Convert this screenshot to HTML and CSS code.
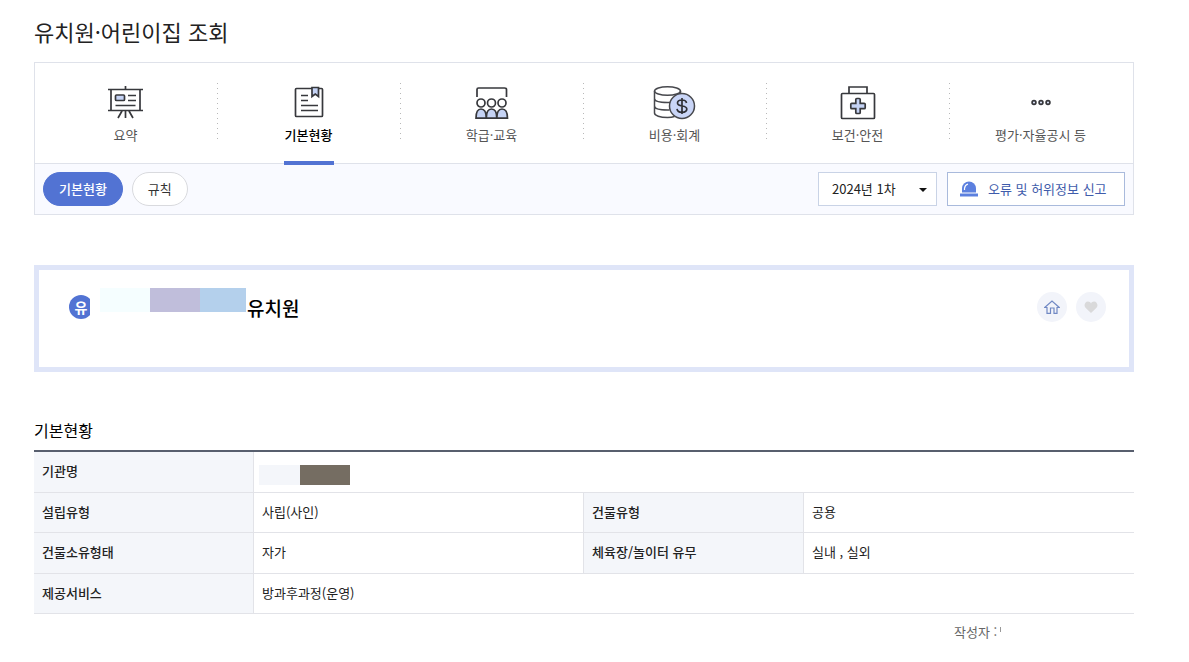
FILE: index.html
```html
<!DOCTYPE html>
<html lang="ko">
<head>
<meta charset="utf-8">
<meta name="viewport" content="width=device-width, initial-scale=1">
<title>유치원·어린이집 조회</title>
<link rel="stylesheet" href="styles.css">
</head>
<body>
<main class="page">
  <h1 class="page-title">유치원·어린이집 조회</h1>

  <div class="nav-box">
    <nav class="tabs">
      <a class="tab" href="#summary">
        <svg class="tab-icon" width="44" height="36" viewBox="0 0 44 36" fill="none" stroke="#37383c" stroke-width="1.700">
          <path d="M21.500 2v4M4 5.500h35M7 6v20M36 6v20M4 26.500h35M18 27l-4 7M21.500 27v7M25 27l4 7"/>
          <rect x="11.500" y="11" width="9" height="5.500" rx="1" fill="#c5d3f5"/>
          <path d="M24 11.500h8M24 16.500h8M11.500 21.500h20"/>
        </svg>
        <span>요약</span>
      </a>
      <a class="tab tab-active" href="#basic">
        <svg class="tab-icon" width="44" height="36" viewBox="0 0 44 36" fill="none" stroke="#37383c" stroke-width="1.700">
          <rect x="8.500" y="4.500" width="27" height="28" rx="1"/>
          <path d="M25 3.500h6.500v9l-3.200-2.500-3.300 2.500z" fill="#c5d3f5"/>
          <path d="M14 11.500h7M14 16.500h7M14 21.500h17M14 26.500h17"/>
        </svg>
        <span>기본현황</span>
      </a>
      <a class="tab" href="#class">
        <svg class="tab-icon" width="44" height="36" viewBox="0 0 44 36" fill="none" stroke="#37383c" stroke-width="1.700">
          <path d="M7 13V5.500Q7 4 8.500 4h26Q36.500 4 36.500 5.500V13"/>
          <circle cx="11" cy="19" r="4"/><circle cx="21.500" cy="19" r="4"/><circle cx="32" cy="19" r="4"/>
          <path d="M6 34.200C6 28 8 25 11 25s5.300 3 5.300 9.200zM16.300 34.200c0-6.200 2-9.200 5.200-9.200s5.300 3 5.300 9.200zM26.800 34.200c0-6.200 2-9.200 5.200-9.200s5.500 3 5.500 9.200z" fill="#c5d3f5"/>
        </svg>
        <span>학급·교육</span>
      </a>
      <a class="tab" href="#cost">
        <svg class="tab-icon" width="44" height="36" viewBox="0 0 44 36" fill="none" stroke="#47484d" stroke-width="1.500">
          <ellipse cx="14.500" cy="7" rx="13" ry="4.300"/>
          <path d="M1.500 7v22c0 2.500 5.500 4.500 13 4.500 3 0 5-.3 7-1M27.500 7v4M1.500 14.500c0 2.500 5.500 4 13 4 1.500 0 2.500-.1 4-.3M1.500 22c0 2.500 5.500 4 13 4h2"/>
          <circle cx="29" cy="22" r="12.500" fill="#c9d5f7"/>
          <path d="M29 14v16M33.500 19c-.3-2-2-3-4.500-3s-4.500 1-4.500 3c0 4.500 9.300 1.500 9.300 6 0 2-2 3.300-4.800 3.300s-4.700-1.300-5-3.500" stroke="#2f3036" stroke-width="1.700"/>
        </svg>
        <span>비용·회계</span>
      </a>
      <a class="tab" href="#health">
        <svg class="tab-icon" width="44" height="36" viewBox="0 0 44 36" fill="none" stroke="#37383c" stroke-width="1.700">
          <rect x="5.500" y="9.500" width="33" height="25" rx="1"/>
          <path d="M13 9.500v-6.500h18v6.500"/>
          <path d="M19.800 15.500q0-1 1-1h2.400q1 0 1 1V19.300h4q1 0 1 1v3.400q0 1-1 1h-4v3.800q0 1-1 1h-2.400q-1 0-1-1v-3.800h-4q-1 0-1-1v-3.400q0-1 1-1h4z" fill="#c5d3f5"/>
        </svg>
        <span>보건·안전</span>
      </a>
      <a class="tab" href="#evaluation">
        <svg class="tab-icon" width="44" height="36" viewBox="0 0 44 36" fill="#dfe6fa" stroke="#37383c" stroke-width="1.700">
          <circle cx="15" cy="18.500" r="1.900"/><circle cx="22" cy="18.500" r="1.900"/><circle cx="29" cy="18.500" r="1.900"/>
        </svg>
        <span>평가·자율공시 등</span>
      </a>
    </nav>

    <div class="subbar">
      <a class="pill pill-active" href="#basic">기본현황</a>
      <a class="pill" href="#rules">규칙</a>
      <div class="subbar-actions">
        <div class="select-wrap">
          <select class="period" aria-label="공시 차수">
            <option>2024년 1차</option>
          </select>
          <svg class="caret" width="8" height="4" viewBox="0 0 8 4"><path d="M0 0h8L4 4z" fill="#111"/></svg>
        </div>
        <button class="report" type="button">
          <svg width="18" height="16" viewBox="0 0 18 16">
            <path d="M2 11.500V7.500a7 7 0 0 1 14 0v4z" fill="#5c80df"/>
            <path d="M4.500 9V7.500Q4.800 4 8 3" fill="none" stroke="#fff" stroke-width="1.200"/>
            <path d="M0 12.500h18V15.500H0z" fill="#5c80df"/>
          </svg>
          <span>오류 및 허위정보 신고</span>
        </button>
      </div>
    </div>
  </div>

  <section class="card">
    <span class="badge"><span class="badge-dot">유</span></span>
    <span class="mask" aria-hidden="true"><i class="mask-a"></i><i class="mask-b"></i><i class="mask-c"></i></span>
    <h2 class="card-name">유치원</h2>
    <div class="card-actions">
      <button class="round" type="button" aria-label="홈페이지">
        <svg width="16" height="14" viewBox="0 0 16 14" fill="none" stroke="#7189c4" stroke-width="1.200"><path d="M.7 7.500L8 1l7.300 6.500H13v5.800h-3V8H6.500v5.300H3V7.500z"/></svg>
      </button>
      <button class="round" type="button" aria-label="관심 등록">
        <svg width="14" height="12" viewBox="0 0 14 12"><path d="M7 12L1.500 6.800C-.5 4.700.8.500 4 .5c1.400 0 2.400.7 3 1.900C7.600 1.200 8.600.5 10 .5c3.200 0 4.500 4.200 2.500 6.300z" fill="#d9d9da"/></svg>
      </button>
    </div>
  </section>

  <h3 class="section-title">기본현황</h3>
  <table class="info">
    <colgroup><col class="col-label"><col class="col-value"><col class="col-label"><col class="col-value"></colgroup>
    <tbody>
      <tr><th scope="row">기관명</th><td class="masked" colspan="3"><span class="name-mask" aria-hidden="true"><i class="mask-d"></i><i class="mask-e"></i></span></td></tr>
      <tr><th scope="row">설립유형</th><td>사립(사인)</td><th scope="row">건물유형</th><td>공용</td></tr>
      <tr><th scope="row">건물소유형태</th><td>자가</td><th scope="row">체육장/놀이터 유무</th><td>실내 , 실외</td></tr>
      <tr><th scope="row">제공서비스</th><td colspan="3">방과후과정(운영)</td></tr>
    </tbody>
  </table>
  <p class="author">작성자 : <i class="author-mark"></i></p>
</main>
</body>
</html>
```
FILE: styles.css
```css
* { box-sizing: border-box; }

body {
  margin: 0;
  background: #fff;
  color: #222;
  font-family: "Noto Sans CJK KR", "Noto Sans", sans-serif;
  font-size: 13px;
  line-height: 20px;
}

a { color: inherit; text-decoration: none; }
button, select { font: inherit; cursor: pointer; }
svg { display: block; flex: none; }

.page { padding: 15px 55px 16px 34px; }

.page-title {
  margin: 0 0 15px;
  font-size: 22px;
  line-height: 32px;
  font-weight: 400;
}

.nav-box { border: 1px solid #dfe2ea; }

.tabs {
  display: grid;
  grid-template-columns: repeat(6, 1fr);
  border-bottom: 1px solid #dfe2ea;
}

.tab {
  position: relative;
  display: flex;
  flex-direction: column;
  align-items: center;
  gap: 5px;
  padding: 21px 2px 18px 0;
  color: #555;
}

.tab:not(:last-child)::before {
  content: "";
  position: absolute;
  right: 0;
  top: 20px;
  width: 1px;
  height: 57px;
  background: repeating-linear-gradient(#b8b8b8 0 1px, transparent 1px 5px);
}

.tab-active { color: #000; font-weight: 500; }

.tab-active::after {
  content: "";
  position: absolute;
  bottom: -2px;
  width: 50px;
  height: 4px;
  background: #5273d3;
}

.subbar {
  display: flex;
  align-items: center;
  gap: 9px;
  padding: 8px;
  background: #f9faff;
}

.pill {
  padding: 6px 15px;
  border: 1px solid #d9dade;
  border-radius: 17px;
  background: #fff;
  color: #333;
}

.pill-active {
  border-color: #5273d3;
  background: #5273d3;
  color: #fff;
  font-weight: 500;
}

.subbar-actions { display: flex; gap: 10px; margin-left: auto; }
.select-wrap { position: relative; }

.period {
  display: block;
  width: 119px;
  height: 34px;
  padding: 0 24px 0 13px;
  appearance: none;
  border: 1px solid #c9d3e6;
  border-radius: 0;
  background: #fff;
  color: #222;
}

.caret { position: absolute; right: 10px; top: 16px; pointer-events: none; }

.report {
  display: flex;
  align-items: center;
  gap: 10px;
  width: 178px;
  height: 34px;
  padding: 0 12px;
  border: 1px solid #a9badc;
  background: #fff;
  color: #3f5cab;
  white-space: nowrap;
}

.card {
  display: flex;
  align-items: flex-start;
  margin-top: 50px;
  padding: 18px 23px 45px 30px;
  border: 5px solid #dfe5f8;
}

.badge { width: 21px; margin: 7px 10px 0 0; overflow: hidden; }

.badge-dot {
  display: block;
  width: 24px;
  height: 24px;
  border-radius: 12px;
  background: #5273d3;
  color: #fff;
  font-size: 14px;
  line-height: 24px;
  font-weight: 700;
  text-align: center;
}

.mask { display: flex; height: 24px; }
.mask-a { width: 50px; background: #f5feff; }
.mask-b { width: 50px; background: #c0bedb; }
.mask-c { width: 46px; background: #b4d0ec; }

.card-name {
  margin: 6px 0 0 1px;
  color: #000;
  font-size: 19px;
  line-height: 28px;
  font-weight: 500;
}

.card-actions { display: flex; gap: 9px; margin: 4px 0 0 auto; }

.round {
  display: grid;
  place-items: center;
  width: 30px;
  height: 30px;
  padding: 0;
  border: 0;
  border-radius: 50%;
  background: #f2f4fa;
}

.section-title {
  margin: 46px 0 8px;
  color: #000;
  font-size: 16px;
  line-height: 24px;
  font-weight: 400;
}

.info {
  width: 100%;
  table-layout: fixed;
  border-collapse: separate;
  border-spacing: 0;
  border-top: 2px solid #585f6e;
}

.col-label { width: 20%; }
.col-value { width: 30%; }

.info th, .info td {
  height: 40px;
  padding: 0 8px 2px;
  border-right: 1px solid #e2e3e8;
  border-bottom: 1px solid #e2e3e8;
  text-align: left;
}

.info tr:nth-child(odd) > * { height: 41px; }
.info th { background: #f4f6fa; font-weight: 500; }
.info td:last-child { border-right: 0; }
.info .masked { padding: 5px 5px 0; }

.name-mask { display: flex; height: 20px; }
.mask-d { width: 41px; background: #f4f6fa; }
.mask-e { width: 50px; background: #756d62; }

.author {
  display: flex;
  gap: 3px;
  width: 180px;
  margin: 8px 0 0 auto;
  color: #666;
}

.author-mark { width: 1px; height: 5px; margin-top: 5px; background: #999; }
```
